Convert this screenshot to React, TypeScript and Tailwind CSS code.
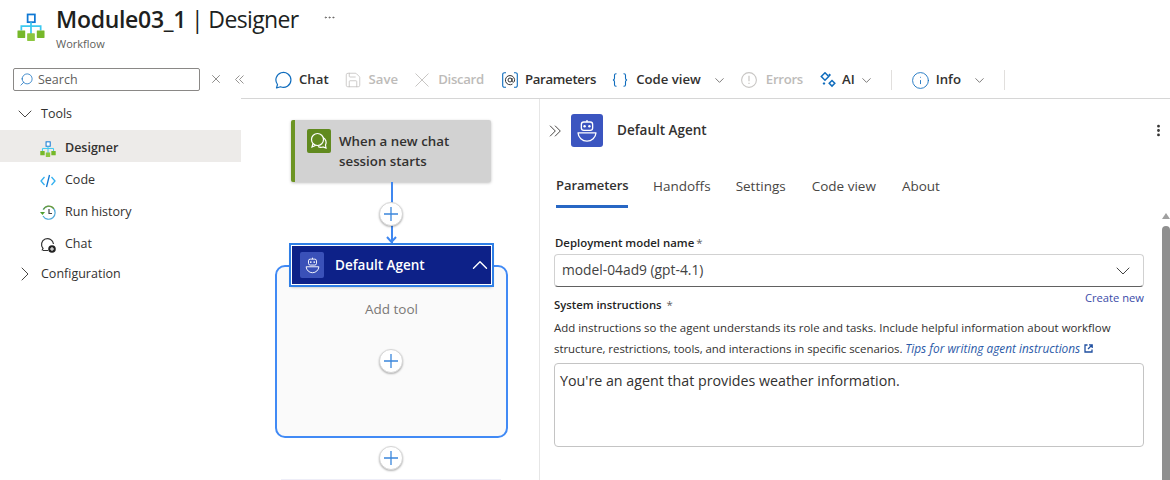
import React from "react";
import { ChevronDown, ChevronRight, ChevronUp, Search, X, Save, Info, MoreVertical, MoreHorizontal } from "lucide-react";

const WorkflowIcon = ({ size = 28 }: { size?: number }) => (
  <svg width={size} height={size} viewBox="0 0 28 29" fill="none">
    <rect x="10.500" y="1.500" width="7.500" height="8" fill="#fff" stroke="#0f78d4" strokeWidth="1.800" />
    <path d="M14 9.500V22M4 18V13.500h20V18" stroke="#3cc9f0" strokeWidth="1.800" />
    <rect x="0" y="18" width="8" height="8" rx="0.500" fill="#76b82a" />
    <rect x="10" y="21" width="8" height="8" rx="0.500" fill="#8cc63f" />
    <rect x="20" y="18" width="8" height="8" rx="0.500" fill="#76b82a" />
  </svg>
);

const CodeIcon = () => (
  <svg width="16" height="16" viewBox="0 0 16 16" fill="none">
    <path d="M4.500 4 1 8l3.500 4M11.500 4 15 8l-3.500 4" stroke="#32b0f0" strokeWidth="1.300" />
    <path d="M9.500 2 6.500 14" stroke="#0f78d4" strokeWidth="1.300" />
  </svg>
);

const HistoryIcon = () => (
  <svg width="17" height="17" viewBox="0 0 17 17" fill="none">
    <path d="M3 5.500A6.500 6.500 0 1 1 3 12" stroke="#4fa8d8" strokeWidth="1.200" />
    <path d="M3.500 5.500A6 6 0 0 1 14 5" stroke="#6b9b3a" strokeWidth="1.200" />
    <path d="M0 8h5L2.500 11z" fill="#4f9e2f" />
    <path d="M9 5v4.500h3" stroke="#444" strokeWidth="1.200" />
  </svg>
);

const ChatPlusIcon = () => (
  <svg width="16" height="16" viewBox="0 0 16 16" fill="none">
    <path d="M2 13.500 3 11.500A6 6 0 1 1 13.500 7M3 13.500h5" stroke="#333" strokeWidth="1.200" />
    <circle cx="12" cy="12" r="3.800" fill="#222" />
    <path d="M12 10v4M10 12h4" stroke="#fff" strokeWidth="1" />
  </svg>
);

const ChatBubble = ({ c = "#0f6cbd" }: { c?: string }) => (
  <svg width="17" height="18" viewBox="0 0 17 18" fill="none">
    <path d="M2.500 13.500 1.500 17l4-1.200A7.500 7.500 0 1 0 2.500 13.500Z" stroke={c} strokeWidth="1.200" strokeLinejoin="round" />
  </svg>
);

const AtIcon = () => (
  <svg width="16" height="16" viewBox="0 0 16 16" fill="none">
    <path d="M4 .7H2.500A1.800 1.800 0 0 0 .7 2.500v11a1.800 1.800 0 0 0 1.800 1.800H4M12 .7h1.500a1.800 1.800 0 0 1 1.800 1.800v11a1.800 1.800 0 0 1-1.800 1.800H12" stroke="#0f6cbd" strokeWidth="1.100" />
    <circle cx="8" cy="8" r="2" stroke="#333" strokeWidth="1" />
    <path d="M10 6v3a1.300 1.300 0 0 0 2.400.5A4.600 4.600 0 1 0 10.500 12" stroke="#333" strokeWidth="1" />
  </svg>
);

const BracesIcon = () => (
  <svg width="16" height="14" viewBox="0 0 16 14" fill="none">
    <path d="M4.500 .7H4a1.500 1.500 0 0 0-1.500 1.500v3A1.800 1.800 0 0 1 1 7a1.800 1.800 0 0 1 1.500 1.800v3A1.500 1.500 0 0 0 4 13.300h.5" stroke="#0f6cbd" strokeWidth="1.100" />
    <path d="M11.500 .7h.5a1.500 1.500 0 0 1 1.500 1.500v3A1.800 1.800 0 0 0 15 7a1.800 1.800 0 0 0-1.500 1.800v3a1.500 1.500 0 0 1-1.500 1.500h-.5" stroke="#0f6cbd" strokeWidth="1.100" />
  </svg>
);

const DiscardIcon = () => (
  <svg width="14" height="14" viewBox="0 0 14 14" fill="none">
    <path d="M.5.500l13 13M13.500.500l-13 13" stroke="#c8c6c4" strokeWidth="1" />
  </svg>
);

const SparkIcon = () => (
  <svg width="16" height="16" viewBox="0 0 16 16" fill="none">
    <path d="M5 .8 8.700 4.500 5 8.200 1.300 4.500Z" stroke="#0f6cbd" strokeWidth="1.500" />
    <path d="M12 8.500 14.800 11.300 12 14.100 9.200 11.300Z" stroke="#0f6cbd" strokeWidth="1.500" />
    <rect x="8.600" y="2" width="2" height="2" fill="#0f6cbd" transform="rotate(45 9.600 3)" />
    <rect x="3" y="10.500" width="2" height="2" fill="#0f6cbd" transform="rotate(45 4 11.500)" />
  </svg>
);

const ErrorIcon = () => (
  <svg width="16" height="16" viewBox="0 0 16 16" fill="none">
    <circle cx="8" cy="8" r="7.400" stroke="#c8c6c4" strokeWidth="1.100" />
    <path d="M8 3.800v5.400M8 10.700v1.300" stroke="#c8c6c4" strokeWidth="1.200" />
  </svg>
);

const RobotIcon = ({ size = 20 }: { size?: number }) => (
  <svg width={size} height={size} viewBox="0 0 20 20" fill="none">
    <path d="M10 .8v1.700" stroke="#fff" strokeWidth="1.100" />
    <rect x="5.300" y="2.500" width="9.400" height="7" rx="2" stroke="#fff" strokeWidth="1.100" />
    <circle cx="8" cy="6" r="1" fill="#fff" />
    <circle cx="12" cy="6" r="1" fill="#fff" />
    <path d="M2.500 11.500h15a7.500 7.500 0 0 1-7.500 7h-0a7.500 7.500 0 0 1-7.500-7Z" stroke="#fff" strokeWidth="1.100" strokeLinejoin="round" />
  </svg>
);

const ChatsIcon = () => (
  <svg width="18" height="18" viewBox="0 0 18 18" fill="none">
    <circle cx="7.500" cy="7.500" r="6" stroke="#fff" strokeWidth="1.200" />
    <path d="M3 11.500 2 15l3.500-1.500" stroke="#fff" strokeWidth="1.200" />
    <path d="M13 5.500a5.500 5.500 0 0 1 2.500 7.500l.5 3-3-1a5.500 5.500 0 0 1-5-.5" stroke="#fff" strokeWidth="1.200" />
  </svg>
);

const PlusButton = ({ className }: { className: string }) => (
  <div className={`absolute w-6 h-6 rounded-full bg-white border border-[#d6d6d6] shadow-[0_1px_2px_rgba(0,0,0,0.3)] flex items-center justify-center ${className}`}>
    <svg width="16" height="16" viewBox="0 0 16 16" fill="none">
      <path d="M8 1v14M1 8h14" stroke="#3b87dc" strokeWidth="1.300" />
    </svg>
  </div>
);

const NavItem = ({ icon, label, active }: { icon: React.ReactNode; label: string; active?: boolean }) => (
  <div className={`h-8 flex items-center pl-10 pt-[5px] ${active ? "bg-[#edebe9] font-semibold" : ""}`}>
    <span className="w-[25px] flex items-center">{icon}</span>
    <span className="text-[#323130]">{label}</span>
  </div>
);

const ToolBtn = ({ icon, label, disabled, w, ml, tight }: { icon: React.ReactNode; label: string; disabled?: boolean; w: string; ml: string; tight?: boolean }) => (
  <div className={`flex items-center h-8 shrink-0 ${ml}`}>
    <span className={`${w} flex items-center`}>{icon}</span>
    <span className={`text-[13.200px] font-semibold ${tight ? "tracking-[-0.3px]" : ""} ${disabled ? "text-[#bdbbb9]" : "text-[#323130]"}`}>{label}</span>
  </div>
);

export default function App() {
  return (
    <div className="w-[1170px] h-[480px] overflow-hidden bg-white text-[12.500px] text-[#323130] font-['Open_Sans','Noto_Sans',sans-serif] flex flex-col">
      <header className="h-[60px] shrink-0 flex pl-[17px] pt-[5px]">
        <div className="pt-[8px] mr-[11px]"><WorkflowIcon /></div>
        <div>
          <div className="flex items-center h-[28px] text-[23px] leading-7 text-[#201f1e] tracking-[-0.3px]">
            <span className="font-semibold">Module03_1</span>
            <span className="ml-[5px] tracking-[-0.65px]">| Designer</span>
            <MoreHorizontal className="ml-[25px] mb-[4px] text-[#605e5c]" size={13} strokeWidth={1.500} />
          </div>
          <div className="mt-[3px] text-[11px] leading-4 text-[#605e5c]">Workflow</div>
        </div>
      </header>

      <div className="flex flex-1 min-h-0">
        <aside className="w-[241px] shrink-0">
          <div className="flex items-center pl-[13px] mt-[7px] h-[24px]">
            <div className="w-[187px] shrink-0 h-[23px] border border-[#8a8886] rounded-[2px] flex items-center pl-[5px]">
              <Search size={15} className="text-[#0f6cbd] -scale-x-100 mr-[4px]" strokeWidth={1.200} />
              <span className="text-[#605e5c] pt-[2px]">Search</span>
            </div>
            <X size={14} strokeWidth={1.200} className="ml-[9px] shrink-0 text-[#605e5c]" />
            <svg width="9" height="9" viewBox="0 0 9 9" fill="none" className="ml-[12px] shrink-0">
              <path d="M4.500.5l-4 4 4 4M8.500.5l-4 4 4 4" stroke="#8a8886" strokeWidth="0.900" />
            </svg>
          </div>
          <div className="mt-[6px]">
            <div className="h-[33px] flex items-center pl-[13px] pt-[1px]">
              <ChevronDown size={24} strokeWidth={1} className="text-[#484644]" />
              <span className="ml-[4px] pt-[1px]">Tools</span>
            </div>
            <NavItem active icon={<WorkflowIcon size={16} />} label="Designer" />
            <NavItem icon={<CodeIcon />} label="Code" />
            <NavItem icon={<HistoryIcon />} label="Run history" />
            <NavItem icon={<ChatPlusIcon />} label="Chat" />
            <div className="h-[28px] flex items-center pl-[13px] pt-[4px]">
              <ChevronRight size={24} strokeWidth={1} className="text-[#484644]" />
              <span className="ml-[4px]">Configuration</span>
            </div>
          </div>
        </aside>

        <main className="flex-1 min-w-0 flex flex-col">
          <div className="h-[39px] shrink-0 border-b border-[#d6d6d6] flex items-center pt-[2px]">
            <ToolBtn ml="ml-[34px]" w="w-[24px]" icon={<ChatBubble />} label="Chat" />
            <ToolBtn ml="ml-[17px]" w="w-[23px]" disabled icon={<Save size={18} strokeWidth={1} className="text-[#bdbbb9] -ml-[2px]" />} label="Save" />
            <ToolBtn ml="ml-[17px]" w="w-[23px]" disabled tight icon={<DiscardIcon />} label="Discard" />
            <ToolBtn ml="ml-[18px]" w="w-[23px]" tight icon={<AtIcon />} label="Parameters" />
            <ToolBtn ml="ml-[16px]" w="w-[24px]" icon={<BracesIcon />} label="Code view" />
            <ChevronDown size={15} strokeWidth={1.300} className="ml-[11px] shrink-0 text-[#605e5c]" />
            <ToolBtn ml="ml-[14px]" w="w-[25px]" disabled tight icon={<ErrorIcon />} label="Errors" />
            <ToolBtn ml="ml-[17px]" w="w-[22px]" icon={<SparkIcon />} label="AI" />
            <ChevronDown size={15} strokeWidth={1.300} className="ml-[4px] shrink-0 text-[#605e5c]" />
            <div className="ml-[17px] w-px h-5 shrink-0 bg-[#e1dfdd]" />
            <ToolBtn ml="ml-[21px]" w="w-[23px]" icon={<Info size={19} strokeWidth={1.100} className="text-[#0f6cbd] -ml-[2px]" />} label="Info" />
            <ChevronDown size={15} strokeWidth={1.300} className="ml-[11px] shrink-0 text-[#605e5c]" />
            <div className="ml-[17px] w-px h-5 shrink-0 bg-[#e1dfdd]" />
          </div>

          <div className="flex flex-1 min-h-0">
            <section className="relative w-[299px] shrink-0 border-r border-[#e6e6e6] overflow-hidden">
              <div className="absolute left-[50px] top-[21px] w-[200px] h-[62px] bg-[#d2d2d2] border-l-4 border-[#6c9423] rounded-[2px] shadow-[0_1px_3px_rgba(0,0,0,0.25)] flex">
                <div className="ml-[12px] mt-[9px] w-6 h-6 rounded-[2px] bg-[#618a1f] flex items-center justify-center"><ChatsIcon /></div>
                <div className="ml-2 mt-[11px] text-[13.300px] font-semibold leading-[20px] text-[#323130] whitespace-nowrap">When a new chat<br />session starts</div>
              </div>
              <div className="absolute left-[149.500px] top-[83px] w-[2px] h-[62px] bg-[#3f87f0]" />
              <svg className="absolute left-[145px] top-[136px]" width="11" height="9" viewBox="0 0 11 9" fill="none">
                <path d="M1 2l4.500 5L10 2" stroke="#3f87f0" strokeWidth="2" />
              </svg>
              <PlusButton className="left-[138px] top-[103px]" />

              <div className="absolute left-[34px] top-[166px] w-[233px] h-[173px] rounded-[10px] border-2 border-[#418aF5] bg-[#fafafa]">
                <div className="mt-[32px] text-center text-[13.500px] text-[#7a7877]">Add tool</div>
              </div>
              <PlusButton className="left-[138px] top-[250px]" />

              <div className="absolute left-[50px] top-[146px] w-[201px] h-[40px] bg-[#0d2188] border border-[#fff] outline-2 outline-[#2f7fe6] shadow-[0_2px_3px_rgba(0,0,0,0.3)] flex items-center">
                <div className="ml-[8px] w-6 h-[26px] rounded-[2px] bg-[#3a51b8] flex items-center justify-center"><RobotIcon size={17} /></div>
                <div className="ml-[11px] text-[13.500px] font-semibold text-white">Default Agent</div>
                <ChevronUp size={26} strokeWidth={1.300} className="absolute -right-[2px] text-white" />
              </div>

              <PlusButton className="left-[138px] top-[347px]" />
              <div className="absolute left-[40px] top-[380px] w-[220px] h-px bg-[#eeeef8]" />
            </section>

            <section className="relative flex-1 min-w-0 pl-[14px] pr-[26px]">
              <div className="flex items-center h-[33px] mt-[15px]">
                <svg width="12" height="12" viewBox="0 0 12 12" fill="none" className="-ml-[5px] mr-[7px] shrink-0">
                  <path d="M1 .7 6.300 6 1 11.300M6 .7 11.300 6 6 11.300" stroke="#484644" strokeWidth="1" />
                </svg>
                <div className="ml-[3px] w-8 h-[33px] rounded-[3px] bg-[#3b55c0] flex items-center justify-center"><RobotIcon size={24} /></div>
                <div className="ml-[14px] text-[13.500px] font-semibold text-[#323130]">Default Agent</div>
                <MoreVertical size={15} strokeWidth={2.500} className="absolute right-[4px] text-[#323130]" />
              </div>
              <div className="flex mt-[19px] ml-[2px] text-[13.500px] text-[#484644] h-[42px]">
                <div className="w-[72px] h-[42px] border-b-[3px] border-[#2867c4] pt-[10px] text-[13px] tracking-[-0.05px] font-semibold text-[#323130] whitespace-nowrap">Parameters</div>
                <div className="ml-[25px] pt-[10px]">Handoffs</div>
                <div className="ml-[25px] pt-[10px]">Settings</div>
                <div className="ml-[26px] pt-[10px]">Code view</div>
                <div className="ml-[26px] pt-[10px]">About</div>
              </div>
              <div className="mt-[27px] ml-[1px] text-[11.400px] leading-4 font-semibold text-[#242424]">Deployment model name<span className="ml-[2px] font-normal text-[#605e5c] align-top">*</span></div>
              <div className="mt-[3px] h-[33px] w-[590px] border border-[#d1d1d1] border-b-[#616161] rounded-[4px] flex items-center justify-between pl-[7px] pr-[8px] text-[13.800px] text-[#424242]">
                <span>model-04ad9 (gpt-4.1)</span>
                <ChevronDown size={24} strokeWidth={1} />
              </div>
              <div className="w-[590px] text-right text-[11.200px] leading-4 mt-[3px] text-[#3a4ba8]">Create new</div>
              <div className="text-[11.300px] leading-4 -mt-[9px] font-semibold text-[#242424]">System instructions <span className="ml-[2px] font-normal text-[#605e5c]">*</span></div>
              <div className="w-[600px] mt-[4px] text-[11.450px] leading-[21px] text-[#323130] whitespace-nowrap">
                Add instructions so the agent understands its role and tasks. Include helpful information about workflow<br />
                <span className="tracking-[-0.04px]">structure, restrictions, tools, and interactions in specific scenarios. </span><i className="text-[11.850px] text-[#2b5aa8]">Tips for writing agent instructions</i>
                <svg className="inline ml-[4px] mb-[2px]" width="9" height="9" viewBox="0 0 9 9" fill="none"><path d="M3.500 1H1v7h7V5.500M5 .8h3.200V4M8 1 4 5" stroke="#1f4fa0" strokeWidth="1.300" /></svg>
              </div>
              <div className="mt-[4px] w-[590px] h-[84px] border border-[#c4c4c4] rounded-[4px] px-[5px] py-[7px] text-[14.250px] leading-5 text-[#323130]">You're an agent that provides weather information.</div>
              <div className="absolute right-0 top-[108px] bottom-0 w-2 flex flex-col items-center">
                <svg width="8" height="6" viewBox="0 0 8 6" className="mt-[6px]"><path d="M4 0l4 6H0z" fill="#a0a0a0" /></svg>
                <div className="mt-[7px] w-2 flex-1 rounded-t-[4px] bg-[#8f8f8f]" />
              </div>
            </section>
          </div>
        </main>
      </div>
    </div>
  );
}
